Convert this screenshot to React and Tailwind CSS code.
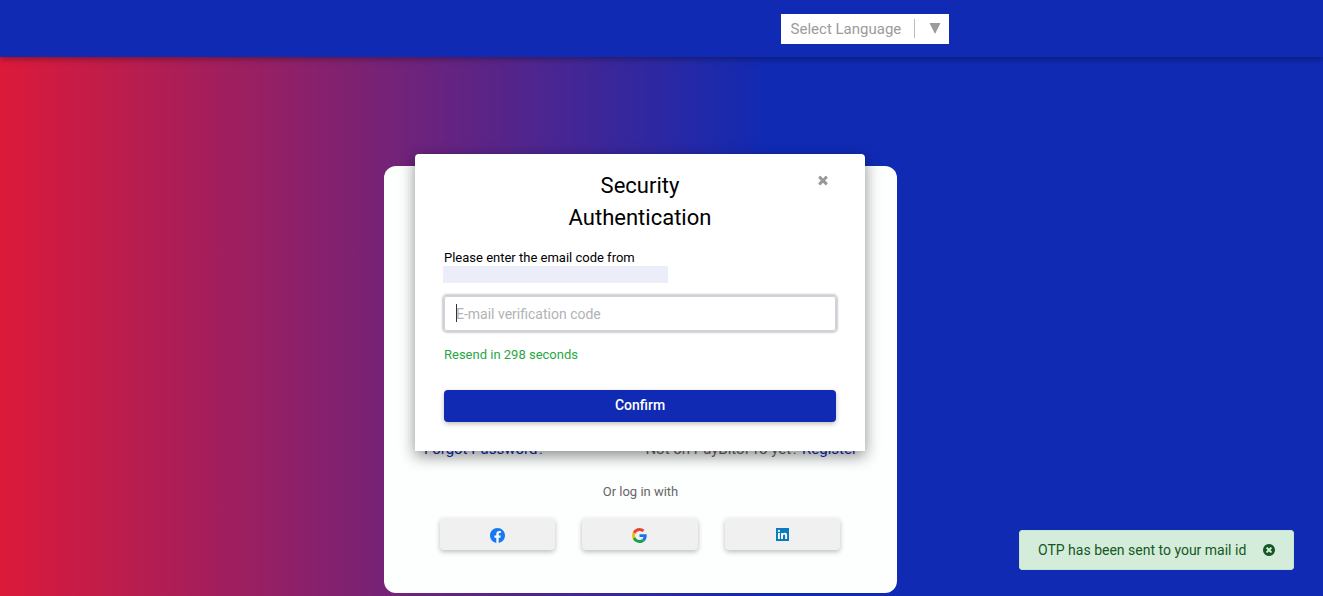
import React, { useState } from "react";

const CloseIcon = () => (
  <svg viewBox="0 0 1792 1792" className="h-[14px] w-[14px]" fill="currentColor">
    <path d="M1490 1322q0 40-28 68l-136 136q-28 28-68 28t-68-28l-294-294-294 294q-28 28-68 28t-68-28l-136-136q-28-28-28-68t28-68l294-294-294-294q-28-28-28-68t28-68l136-136q28-28 68-28t68 28l294 294 294-294q28-28 68-28t68 28l136 136q28 28 28 68t-28 68l-294 294 294 294q28 28 28 68z" />
  </svg>
);

const CloseCircleIcon = () => (
  <svg viewBox="0 0 1792 1792" className="h-[14px] w-[14px]" fill="currentColor">
    <path d="M1277 1122q0-26-19-45l-181-181 181-181q19-19 19-45 0-27-19-46l-90-90q-19-19-46-19-26 0-45 19l-181 181-181-181q-19-19-45-19-27 0-46 19l-90 90q-19 19-19 46 0 26 19 45l181 181-181 181q-19 19-19 45 0 27 19 46l90 90q19 19 46 19 26 0 45-19l181-181 181 181q19 19 45 19 27 0 46-19l90-90q19-19 19-46zm387-226q0 209-103 385.5t-279.5 279.5-385.5 103-385.5-103-279.5-279.5-103-385.5 103-385.5 279.5-279.5 385.5-103 385.5 103 279.5 279.5 103 385.5z" />
  </svg>
);

const FacebookIcon = () => (
  <svg viewBox="0 0 24 24" className="mt-[2px] h-[15px] w-[15px]">
    <circle cx="12" cy="12" r="11" fill="#fff" />
    <path
      fill="#1877f2"
      d="M24 12.073c0-6.627-5.373-12-12-12s-12 5.373-12 12c0 5.99 4.388 10.954 10.125 11.854v-8.385H7.078v-3.47h3.047V9.43c0-3.007 1.792-4.669 4.533-4.669 1.312 0 2.686.235 2.686.235v2.953H15.83c-1.491 0-1.956.925-1.956 1.874v2.25h3.328l-.532 3.47h-2.796v8.385C19.612 23.027 24 18.062 24 12.073z"
    />
  </svg>
);

const GoogleIcon = () => (
  <svg viewBox="0 0 48 48" className="mt-[2px] h-[15px] w-[15px]">
    <path
      fill="#ea4335"
      d="M24 9.5c3.54 0 6.71 1.22 9.21 3.6l6.85-6.85C35.9 2.38 30.47 0 24 0 14.62 0 6.51 5.38 2.56 13.22l7.98 6.19C12.43 13.72 17.74 9.5 24 9.5z"
    />
    <path
      fill="#1a73e8"
      d="M46.98 24.55c0-1.57-.15-3.09-.38-4.55H24v9.02h12.94c-.58 2.96-2.26 5.48-4.78 7.18l7.73 6c4.51-4.18 7.09-10.36 7.09-17.65z"
    />
    <path
      fill="#fbbc05"
      d="M10.53 28.59c-.48-1.45-.76-2.99-.76-4.59s.27-3.14.76-4.59l-7.98-6.19C.92 16.46 0 20.12 0 24c0 3.88.92 7.54 2.56 10.78l7.97-6.19z"
    />
    <path
      fill="#16a34a"
      d="M24 48c6.48 0 11.93-2.13 15.89-5.81l-7.73-6c-2.15 1.45-4.92 2.3-8.16 2.3-6.26 0-11.57-4.22-13.47-9.91l-7.98 6.19C6.51 42.62 14.62 48 24 48z"
    />
  </svg>
);

const LinkedinIcon = () => (
  <svg viewBox="0 0 24 24" className="h-[13px] w-[13px]">
    <rect x="1" y="1" width="22" height="22" fill="#fff" />
    <path
      fill="#0a7bbf"
      d="M20.447 20.452h-3.554v-5.569c0-1.328-.027-3.037-1.852-3.037-1.853 0-2.136 1.445-2.136 2.939v5.667H9.351V9h3.414v1.561h.046c.477-.9 1.637-1.85 3.37-1.85 3.601 0 4.267 2.37 4.267 5.455v6.286zM5.337 7.433a2.062 2.062 0 0 1-2.063-2.065 2.064 2.064 0 1 1 2.063 2.065zm1.782 13.019H3.555V9h3.564v11.452zM24 0H0v24h24V0z"
    />
  </svg>
);

const socials = [
  { name: "Facebook", icon: <FacebookIcon /> },
  { name: "Google", icon: <GoogleIcon /> },
  { name: "LinkedIn", icon: <LinkedinIcon /> },
];

const Header = () => (
  <header className="relative z-10 flex h-[57px] items-center bg-[#102ab3] pl-[59%] shadow-[0_2px_6px_rgba(0,0,0,0.35)]">
    <div className="relative flex h-[30px] w-[168px] items-center bg-white text-[#9b9b9b]">
      <select
        aria-label="Select Language"
        className="h-full w-full appearance-none pl-[10px] text-[15px] leading-[20px] focus:outline-none"
      >
        <option>Select Language</option>
      </select>
      <span className="pointer-events-none absolute right-2 flex items-center gap-[14px]">
        <span className="h-[19px] w-px bg-[#bbb]" />
        <svg viewBox="0 0 12 12" className="h-3 w-3" fill="currentColor">
          <path d="M0.500 0h11L6 11z" />
        </svg>
      </span>
    </div>
  </header>
);

const LoginCard = () => (
  <section className="flex h-[427px] w-full max-w-[513px] flex-col justify-end rounded-[12px] bg-[#fdfffe] px-10 pb-[43px] text-[#666]">
    <div className="flex justify-between text-[15px] leading-5">
      <a href="#forgot" className="text-[#102ab3]">
        Forgot Password?
      </a>
      <span>
        Not on PayBitoPro yet?{" "}
        <a href="#register" className="text-[#102ab3]">
          Register
        </a>
      </span>
    </div>
    <p className="mt-[23px] text-center text-[13px] leading-5">Or log in with</p>
    <div className="mt-4 grid grid-cols-3 gap-[27px] pr-[17px] pl-4">
      {socials.map((item) => (
        <button
          key={item.name}
          aria-label={item.name}
          className="flex h-8 items-center justify-center rounded bg-[#f0f0f0] shadow-[0_2px_5px_rgba(0,0,0,0.26)]"
        >
          {item.icon}
        </button>
      ))}
    </div>
  </section>
);

const SecurityModal = () => {
  const [code, setCode] = useState("");

  return (
    <form
      onSubmit={(e) => e.preventDefault()}
      className="relative w-[450px] rounded-t-[4px] bg-white px-[29px] pt-4 pb-[29px] text-black shadow-[0_5px_15px_rgba(0,0,0,0.45)]"
    >
      <h2 className="mx-auto w-[180px] text-center text-[22px] leading-8">
        Security Authentication
      </h2>
      <button
        type="button"
        aria-label="Close"
        className="absolute top-[19px] right-[35px] text-[#999]"
      >
        <CloseIcon />
      </button>
      <label htmlFor="code" className="mt-[15px] block text-[13px] leading-[17px]">
        Please enter the email code from
      </label>
      <div className="-ml-px h-[17px] w-[225px] bg-[#ebeef8]" />
      <div className="relative mt-[13px]">
        <input
          id="code"
          value={code}
          onChange={(e) => setCode(e.target.value)}
          placeholder="E-mail verification code"
          className="block h-[35px] w-full rounded-[3px] border border-[#ced4da] px-[11px] text-[14px] shadow-[0_0_2px_2px_#ccced2] placeholder:text-[#b0b3b6] focus:outline-none"
        />
        <span className="pointer-events-none absolute top-2 left-3 h-[18px] w-px bg-[#333]" />
      </div>
      <p className="mt-[14px] text-[13px] leading-5 text-[#28a745]">
        Resend in 298 seconds
      </p>
      <button
        type="submit"
        className="mt-[25px] flex h-8 w-full items-center justify-center rounded-[4px] bg-[#102ab3] pb-[2px] text-[14px] font-medium text-white shadow-[0_2px_5px_rgba(0,0,0,0.26)]"
      >
        Confirm
      </button>
    </form>
  );
};

const Toast = () => (
  <div
    role="alert"
    className="fixed right-[29px] bottom-[26px] flex h-10 min-w-[275px] items-center justify-between gap-[10px] rounded-[3px] border border-[#c3e6cb] bg-[#d4edda] pr-[17px] pl-[18px] text-[14px] text-[#155724]"
  >
    <span>OTP has been sent to your mail id</span>
    <button aria-label="Dismiss">
      <CloseCircleIcon />
    </button>
  </div>
);

const App = () => {
  return (
    <div className="flex min-h-screen flex-col font-['Roboto',sans-serif]">
      <Header />
      <main className="relative flex flex-grow justify-center bg-[linear-gradient(90deg,#dc1a3a_0%,#102ab3_58%)] pt-[109px] pr-[42px] pb-[3px]">
        <LoginCard />
        <div className="absolute inset-0 flex items-start justify-center pt-[97px] pr-[43px]">
          <SecurityModal />
        </div>
      </main>
      <Toast />
    </div>
  );
};

export default App;
